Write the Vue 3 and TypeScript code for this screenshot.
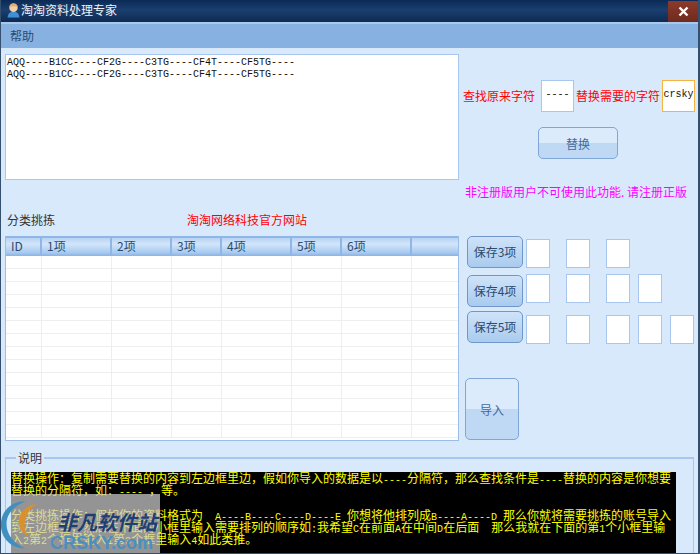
<template>
  <div class="window">
    <div class="titlebar">
      <svg class="user-icon" width="15" height="16" viewBox="0 0 18 18">
        <path d="M2 18c0-5 3-7 7-7s7 2 7 7z" fill="#3f8fd6" />
        <circle cx="9" cy="6.5" r="5" fill="#f3cfa6" />
        <path d="M4 6c0-4 3-5 5-5s5 1 5 5c-2-2-7-2-10 0z" fill="#dcae7e" />
      </svg>
      <span class="title">淘淘资料处理专家</span>
      <div class="close">
        <svg width="11" height="11" viewBox="0 0 11 11">
          <path d="M1.5 1.5l8 8M9.5 1.5l-8 8" stroke="#fff" stroke-width="2.4" />
        </svg>
      </div>
    </div>
    <div class="menubar"><span>帮助</span></div>

    <div class="body">
      <div class="left">
        <div class="source">
          <div>AQQ----B1CC----CF2G----C3TG----CF4T----CF5TG----</div>
          <div>AQQ----B1CC----CF2G----C3TG----CF4T----CF5TG----</div>
        </div>
        <div class="table-head">
          <span class="group-name">分类挑拣</span>
          <span class="site">淘淘网络科技官方网站</span>
        </div>
        <div class="grid">
          <div class="grid-header">
            <div v-for="c in columns" :key="c.label" class="hcell" :style="{ width: c.width + 'px' }">{{ c.label }}</div>
            <div class="hcell filler"></div>
          </div>
          <div v-for="r in 14" :key="r" class="grid-row">
            <div v-for="c in columns" :key="c.label" class="cell" :style="{ width: c.width + 'px' }"></div>
          </div>
        </div>
      </div>

      <div class="right">
        <div class="replace-row">
          <span class="red">查找原来字符</span>
          <div class="box find">----</div>
          <span class="red">替换需要的字符</span>
          <div class="box focus">crsky</div>
        </div>
        <button class="glass replace-btn">替换</button>
        <div class="notice">非注册版用户不可使用此功能. 请注册正版</div>
        <div class="save-rows">
          <div v-for="s in saves" :key="s.count" class="save-row" :class="'save-' + s.count">
            <button class="save"><span>保存{{ s.count }}项</span></button>
            <div class="slots">
              <div v-for="n in s.count" :key="n" class="slot" :class="{ wide: n > 1 && n < 4 }"></div>
            </div>
          </div>
        </div>
        <button class="glass import-btn">导入</button>
      </div>
    </div>

    <fieldset class="help">
      <legend>说明</legend>
      <div class="console">
        <div v-for="(line, i) in helpLines" :key="i" class="line">
          <span v-for="(run, j) in splitRuns(line)" :key="j" :class="{ latin: run.latin }">{{ run.text }}</span>
        </div>
        <div class="watermark">
          <svg class="swirl" width="52" height="60" viewBox="0 0 64 62">
            <path d="M32 3C14 3 1 15 1 32s13 29 30 29C17 55 8 44 8 31S18 8 32 3z" fill="#3f8fc0" />
            <path d="M44 6c-13 3-22 12-21 24 1 9 7 14 12 16-4-6-6-11-4-18 1-8 6-16 13-22z" fill="#d9912f" />
          </svg>
          <span class="wm-cn">非凡软件站</span>
          <span class="wm-en">CRSKY.com</span>
        </div>
      </div>
    </fieldset>
  </div>
</template>

<script setup lang="ts">
const columns = [
  { label: 'ID', width: 36 },
  { label: '1项', width: 70 },
  { label: '2项', width: 60 },
  { label: '3项', width: 50 },
  { label: '4项', width: 70 },
  { label: '5项', width: 50 },
  { label: '6项', width: 70 },
];

const saves = [{ count: 3 }, { count: 4 }, { count: 5 }];

const helpLines = [
  '替换操作：复制需要替换的内容到左边框里边，假如你导入的数据是以----分隔符，那么查找条件是----替换的内容是你想要',
  '替换的分隔符，如：---- ，等。',
  ' ',
  '分类挑拣操作：假如你的资料格式为  A----B----C----D----E 你想将他排列成B----A----D 那么你就将需要挑拣的账号导入',
  '到左边框里，然后在下面的小框里输入需要排列的顺序如:我希望C在前面A在中间D在后面  那么我就在下面的第1个小框里输',
  '入2第2个框里输入1第3个框里输入4如此类推。',
];

// ascii is half width in the original bitmap font, so it gets its own run
function splitRuns(line: string) {
  const parts = line.match(/[\x20-\x7e]+|[^\x20-\x7e]+/g) || [];
  return parts.map((text) => ({ text, latin: /^[\x20-\x7e]/.test(text) }));
}
</script>

<style scoped>
.window {
  width: 700px;
  height: 554px;
  box-sizing: border-box;
  display: flex;
  flex-direction: column;
  overflow: hidden;
  background: #d8e9fc;
  border-left: 1px solid #35506f;
  border-right: 2px solid #35506f;
  border-bottom: 1px solid #35506f;
  font-family: "Noto Sans CJK SC", "Liberation Sans", sans-serif;
  font-size: 12px;
  color: #222;
}
.titlebar {
  height: 22px;
  flex: none;
  box-sizing: border-box;
  display: flex;
  align-items: center;
  padding-left: 5px;
  background: linear-gradient(#0b2a55, #1b3f70 45%, #0d2a52);
}
.user-icon {
  flex: none;
  margin-top: -2px;
}
.title {
  margin: -3px 0 0 0;
  color: #eef4fa;
  font-size: 12px;
}
.close {
  margin-left: auto;
  width: 30px;
  height: 21px;
  display: flex;
  align-items: center;
  justify-content: center;
  background: linear-gradient(#8c3a2a, #6f2a1e);
}
.menubar {
  height: 26px;
  flex: none;
  box-sizing: border-box;
  display: flex;
  align-items: center;
  padding: 0 0 2px 9px;
  background: #86b1e0;
  border-top: 2px solid #a9c9ec;
  color: #2c4a6e;
}
.body {
  display: flex;
  padding: 6px 0 0 4px;
}
.left {
  width: 454px;
  flex: none;
}
.source {
  height: 122px;
  box-sizing: content-box;
  padding-top: 2px;
  padding-left: 1px;
  width: 451px;
  background: #fff;
  border: 1px solid #a8c6ee;
  font-family: "Liberation Mono", monospace;
  font-size: 10px;
  line-height: 12px;
  color: #111;
}
.table-head {
  height: 56px;
  box-sizing: border-box;
  display: flex;
  align-items: flex-start;
  padding: 32px 0 0 2px;
  line-height: 16px;
  color: #333;
}
.group-name {
  width: 180px;
}
.site {
  color: #f00;
}
.grid {
  height: 204px;
  background: #fff;
  border: 1px solid #9bbdea;
  border-width: 0 1px 1px 1px;
  overflow: hidden;
}
.grid-header {
  height: 17px;
  display: flex;
  background: linear-gradient(#b5d3f3, #d2e5fa 35%, #a9cbf0 85%, #92b9e8);
  border-top: 2px solid #8fb6e6;
  border-bottom: 1px solid #8fb6e6;
}
.hcell {
  box-sizing: border-box;
  padding-left: 5px;
  line-height: 15px;
  border-right: 2px solid #8fb6e6;
  color: #2c4a6e;
  flex: none;
}
.filler {
  flex: 1;
  border-right: 0;
}
.grid-row {
  height: 13px;
  display: flex;
  box-sizing: border-box;
  border-bottom: 1px solid #eee;
}
.cell {
  flex: none;
  box-sizing: border-box;
  border-right: 1px solid #eee;
}
.right {
  flex: 1;
  min-width: 0;
  position: relative;
}
.replace-row {
  display: flex;
  align-items: center;
  margin: 25px 0 0 4px;
  height: 33px;
}
.red {
  color: #f00;
  white-space: nowrap;
}
.box {
  flex: none;
  box-sizing: border-box;
  width: 33px;
  height: 32px;
  background: #fff;
  border: 1px solid #a8c6ee;
  font-family: "Liberation Mono", monospace;
  font-size: 10px;
  line-height: 28px;
  text-align: center;
  color: #111;
}
.find {
  margin: 0 1px 0 6px;
}
.focus {
  border-color: #f5b342;
  margin-left: 2px;
}
.find + .red {
  margin-left: 1px;
}
.glass {
  display: block;
  box-sizing: border-box;
  padding: 0;
  border: 1px solid #7fa6d6;
  border-radius: 5px;
  background: linear-gradient(#dcebfc 50%, #bfd8f3 50%);
  color: #3f6a9e;
  font: inherit;
}
.replace-btn {
  width: 80px;
  height: 32px;
  margin: 15px 0 0 79px;
}
.notice {
  color: #f0f;
  margin: 25px 0 0 6px;
  line-height: 16px;
}
.save-rows {
  margin: 36px 0 0 8px;
}
.save-row {
  display: flex;
  height: 32px;
}
.save-4 {
  margin-top: 7px;
}
.save-5 {
  margin-top: 4px;
}
.save {
  flex: none;
  box-sizing: border-box;
  width: 56px;
  height: 32px;
  padding: 0 0 2px;
  border: 1px solid #6f97c9;
  border-radius: 5px;
  background: linear-gradient(#cfe3f9, #a9cbee);
  color: #2c4a6e;
  font: inherit;
}
.slots {
  display: flex;
  margin: 3px 0 0 3px;
}
.save-4 .slots {
  margin-top: -1px;
}
.save-5 .slots {
  margin-top: 4px;
}
.slot {
  box-sizing: border-box;
  width: 24px;
  height: 29px;
  margin-right: 8px;
  background: #fff;
  border: 1px solid #a8c6ee;
}
.slot.wide {
  margin-left: 8px;
}
.import-btn {
  width: 54px;
  height: 62px;
  margin: 35px 0 0 6px;
}
.help {
  margin: 10px 4px 0 4px;
  padding: 0 0 0 5px;
  flex: 1;
  min-height: 0;
  border: 1px solid #a8c6ee;
  border-width: 2px 1px 0 1px;
  min-width: 0;
  position: relative;
}
.help legend {
  padding: 0 2px;
  margin-left: 5px;
  color: #333;
  line-height: 14px;
}
.console {
  position: relative;
  width: 665px;
  height: 81px;
  margin-top: 7px;
  background: #000;
  color: #ff0;
  font-size: 12px;
  line-height: 12px;
  white-space: pre;
}
.line {
  height: 12.3px;
}
.latin {
  font-family: "Liberation Mono", monospace;
  font-size: 10px;
}
.watermark {
  position: absolute;
  left: 0;
  top: 22px;
  width: 149px;
  height: 60px;
  background: rgba(205, 205, 205, 0.72);
}
.swirl {
  position: absolute;
  left: -11px;
  top: 0;
}
.wm-cn {
  position: absolute;
  left: 46px;
  top: 16px;
  font-size: 20px;
  line-height: 24px;
  font-weight: 700;
  font-style: italic;
  color: #1f3f74;
}
.wm-en {
  position: absolute;
  left: 39px;
  top: 39px;
  font-family: "Liberation Sans", sans-serif;
  font-size: 18px;
  line-height: 20px;
  font-weight: 700;
  color: #4a8fc0;
}
</style>
